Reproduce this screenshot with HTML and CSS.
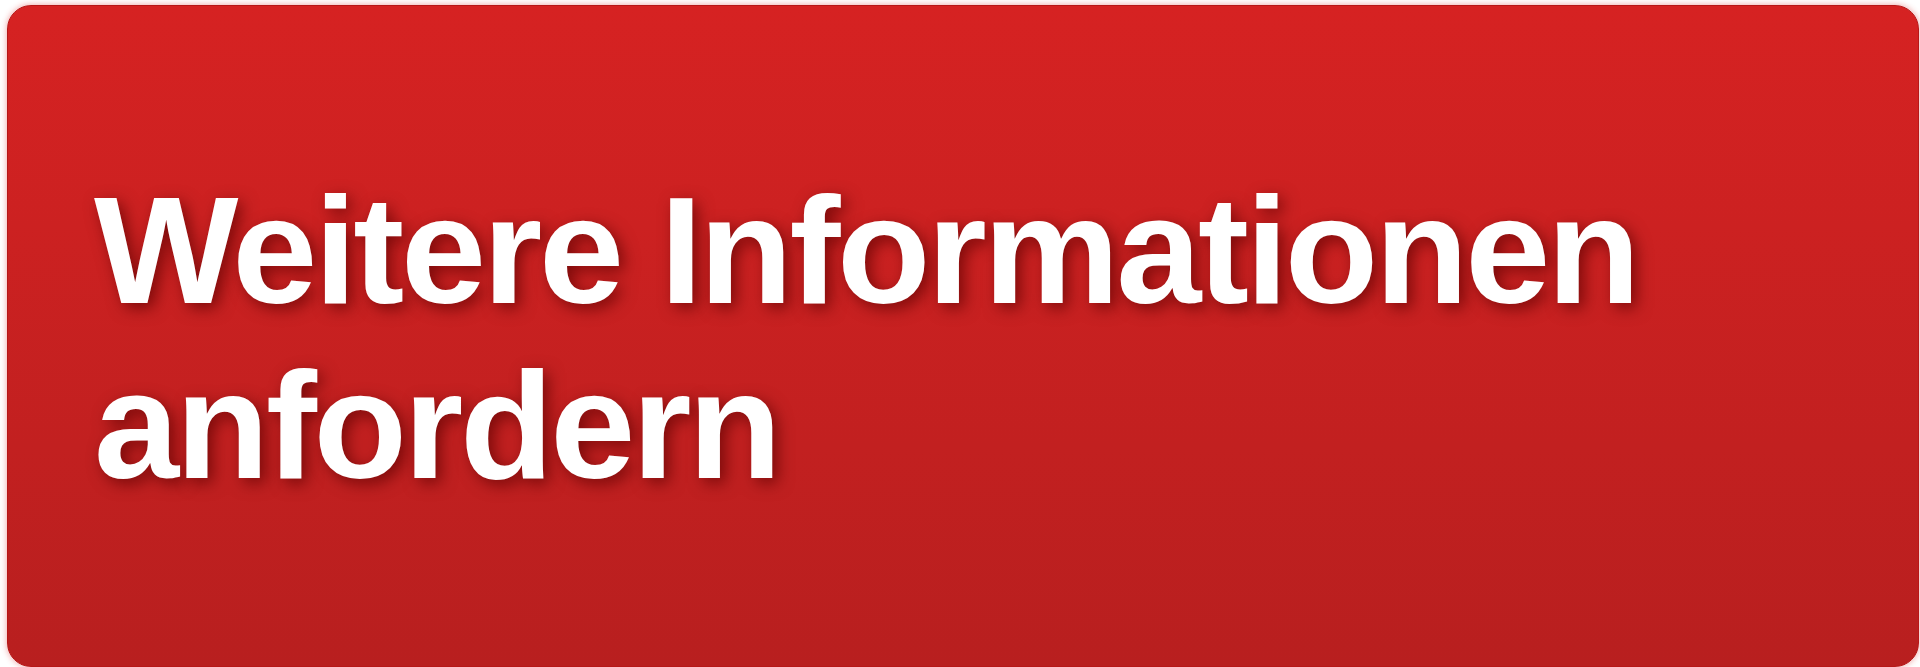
FILE: index.html
```html
<!DOCTYPE html>
<html lang="de">

<head>
  <meta charset="UTF-8" />
  <title>Weitere Informationen anfordern</title>
  <meta name="viewport" content="width=device-width, initial-scale=1.0" />
  <link rel="stylesheet" href="styles.css">
</head>

<body>

  <a class="cta-btn" href="#">
    <span class="cta-label">Weitere Informationen anfordern</span>
  </a>

</body>

</html>
```

FILE: styles.css
```css
* {
  margin: 0;
  padding: 0;
  box-sizing: border-box;
  font-family: 'Liberation Sans', Arial, sans-serif;
}

html,
body {
  height: 100%;
}

body {
  background: #fff;
  display: flex;
  padding: 5px 1px 0 7px;
}

.cta-btn {
  flex: 1;
  display: flex;
  align-items: center;
  padding: 2px 240px 0 86px;
  border: 1px solid #b71717;
  border-radius: 24px;
  background: linear-gradient(to bottom, #d62222, #b81f1f);
  box-shadow: 0 0 6px rgba(214, 40, 40, 0.45);
  text-decoration: none;
}

.cta-label {
  color: #fff;
  font-size: 153px;
  font-weight: 700;
  line-height: 175px;
  letter-spacing: -3.3px;
  text-shadow: 5px 5px 16px rgba(90, 0, 0, 0.7);
}
```
